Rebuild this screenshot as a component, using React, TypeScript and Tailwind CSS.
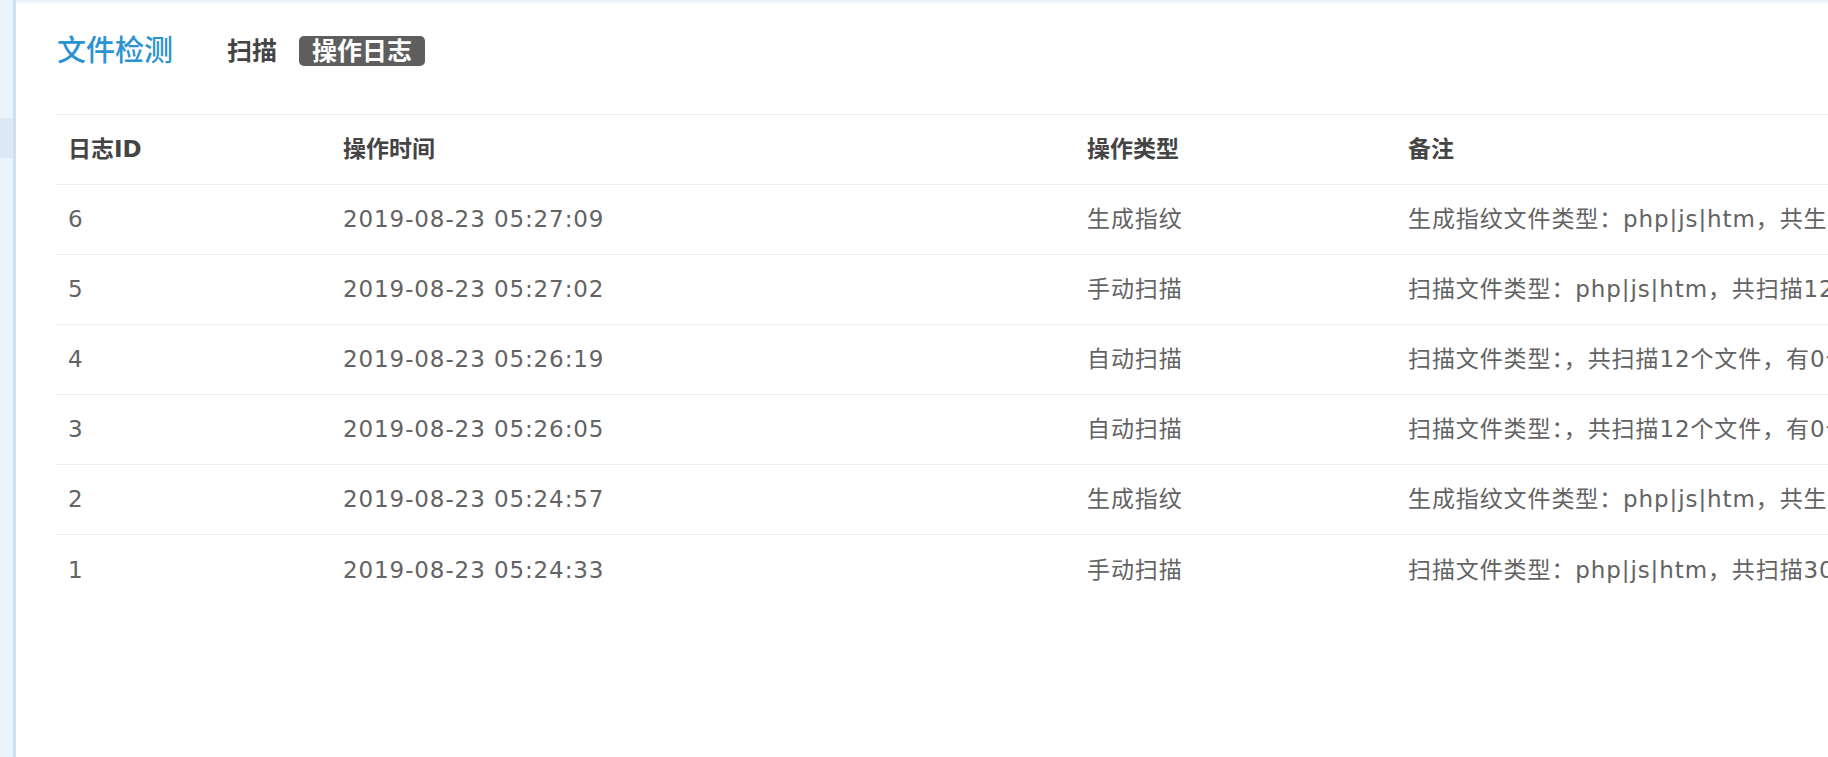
const logs = [
  { id: 6, time: '2019-08-23 05:27:09', type: '生成指纹', note: '生成指纹文件类型：php|js|htm，共生成12个文件指纹' },
  { id: 5, time: '2019-08-23 05:27:02', type: '手动扫描', note: '扫描文件类型：php|js|htm，共扫描12个文件，有0个文件被修改' },
  { id: 4, time: '2019-08-23 05:26:19', type: '自动扫描', note: '扫描文件类型：，共扫描12个文件，有0个文件被修改' },
  { id: 3, time: '2019-08-23 05:26:05', type: '自动扫描', note: '扫描文件类型：，共扫描12个文件，有0个文件被修改' },
  { id: 2, time: '2019-08-23 05:24:57', type: '生成指纹', note: '生成指纹文件类型：php|js|htm，共生成12个文件指纹' },
  { id: 1, time: '2019-08-23 05:24:33', type: '手动扫描', note: '扫描文件类型：php|js|htm，共扫描30个文件，有0个文件被修改' },
];

const font = "font-['DejaVu_Sans','Noto_Sans_CJK_SC',sans-serif]";
const cols = 'grid grid-cols-[275px_744px_321px_1fr]';

export default function App() {
  return (
    <div className={`flex w-[1828px] h-[757px] overflow-hidden bg-white ${font}`}>
      {/* Sidebar edge */}
      <div className="w-[16px] shrink-0 flex flex-col bg-[#e9f4fc] border-r-[3px] border-[#cfe1f0]">
        <div className="h-[118px]" />
        <div className="h-[40px] bg-[#dde9f4]" />
      </div>

      {/* Main panel */}
      <div className="flex-1 min-w-0 flex flex-col">
        <div className="h-[5px] bg-gradient-to-b from-[#e4f2fb] to-white" />

        <div className="pl-[40px]">
          {/* Header: title + tabs */}
          <div className="h-[42px] mt-[25px] mb-[42px] flex items-center">
            <h1 className="ml-[1px] text-[29px] font-medium text-[#2b93cf] leading-none">文件检测</h1>
            <span className="ml-[54px] text-[25px] font-bold text-[#444] leading-none">扫描</span>
            <span className="ml-[22px] h-[30px] px-[13px] flex items-center rounded-[5px] bg-[#5e5e5e] text-[25px] font-bold text-white leading-none">
              操作日志
            </span>
          </div>

          {/* Log table */}
          <div className="w-[1800px] border-t border-[#eeeeee]">
            <div className={`${cols} h-[70px] items-center border-b border-[#eeeeee] text-[23px] font-bold text-[#444]`}>
              <div className="pl-[12px]">日志ID</div>
              <div className="pl-[12px]">操作时间</div>
              <div className="pl-[12px]">操作类型</div>
              <div className="pl-[12px]">备注</div>
            </div>
            {logs.map((log) => (
              <div
                key={log.id}
                className={`${cols} h-[70px] items-center border-b border-[#eeeeee] last:border-b-0 text-[23px] tracking-[0.9px] text-[#636363]`}
              >
                <div className="pl-[12px]">{log.id}</div>
                <div className="pl-[12px]">{log.time}</div>
                <div className="pl-[12px]">{log.type}</div>
                <div className="pl-[12px] whitespace-nowrap">{log.note}</div>
              </div>
            ))}
          </div>
        </div>
      </div>
    </div>
  );
}
